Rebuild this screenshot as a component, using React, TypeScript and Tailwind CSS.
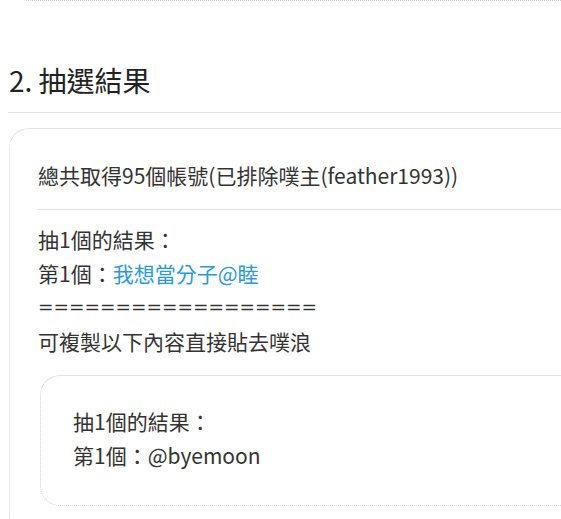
const font = {
  fontFamily: '"Noto Sans CJK TC", "Noto Sans", sans-serif',
};

export default function App() {
  return (
    <div
      className="w-[561px] h-[519px] overflow-hidden bg-white text-[#333]"
      style={font}
    >
      {/* bottom edge of the previous card */}
      <div className="ml-[9px] -mt-[19px] h-5 w-[700px] rounded-bl-[20px] border-l border-b border-dotted border-[#cfcfcf]" />

      <h2 className="mt-[62px] ml-2 pl-px pb-[15px] border-b border-[#e2e2e2] text-[28px] leading-[34px] font-normal text-[#222]">
        2. 抽選結果
      </h2>

      <div className="mt-[15px] ml-[9px] w-[700px] rounded-l-[20px] border-t border-l border-b border-dotted [border-top-style:solid] border-[#d4d4d4] border-t-[#e4e4e4] pt-[29px] pl-[28px] pb-8">
        <div className="text-[21px] leading-[34px]">
          總共取得95個帳號(已排除噗主(feather1993))
        </div>
        <hr className="mt-[17px] -ml-px border-0 border-t border-[#e2e2e2]" />

        <div className="mt-[12px] text-[21px] leading-[34px]">
          <div>抽1個的結果：</div>
          <div>
            第1個：<span className="text-[#2c9ad6]">我想當分子@睦</span>
          </div>
          <div className="font-['DejaVu_Sans'] text-[18.5px]">==================</div>
          <div>可複製以下內容直接貼去噗浪</div>
        </div>

        <div className="mt-[17px] ml-[2px] rounded-l-[20px] border-t border-l border-b border-dotted [border-top-style:solid] border-[#d4d4d4] border-t-[#e4e4e4] pl-8 pt-[28px] pb-[33px] text-[21px] leading-[34px]">
          <div>抽1個的結果：</div>
          <div>第1個：@byemoon</div>
        </div>
      </div>
    </div>
  );
}
